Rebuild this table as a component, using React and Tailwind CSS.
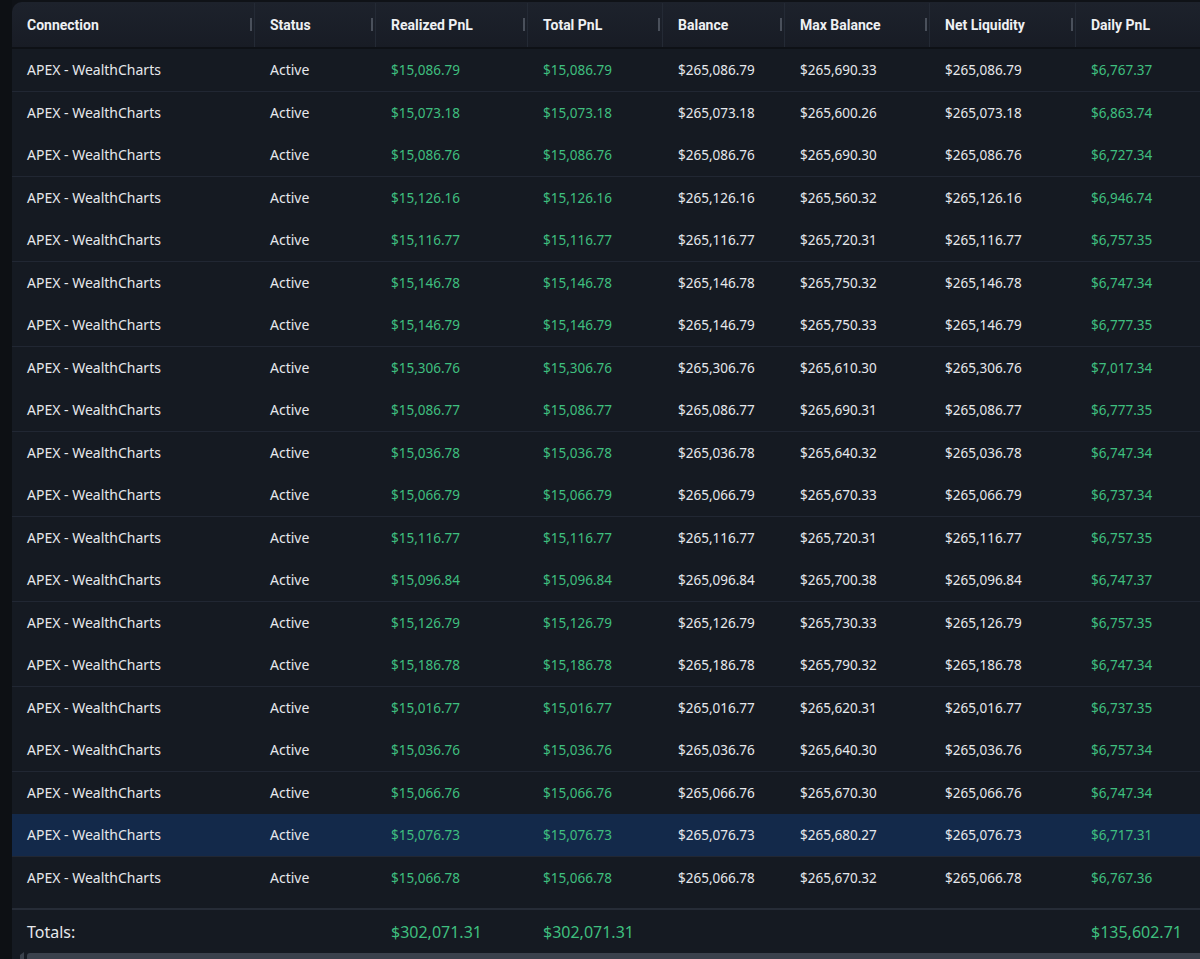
import React from "react";

const rows = [
  ["15,086.79", "265,086.79", "265,690.33", "6,767.37"],
  ["15,073.18", "265,073.18", "265,600.26", "6,863.74"],
  ["15,086.76", "265,086.76", "265,690.30", "6,727.34"],
  ["15,126.16", "265,126.16", "265,560.32", "6,946.74"],
  ["15,116.77", "265,116.77", "265,720.31", "6,757.35"],
  ["15,146.78", "265,146.78", "265,750.32", "6,747.34"],
  ["15,146.79", "265,146.79", "265,750.33", "6,777.35"],
  ["15,306.76", "265,306.76", "265,610.30", "7,017.34"],
  ["15,086.77", "265,086.77", "265,690.31", "6,777.35"],
  ["15,036.78", "265,036.78", "265,640.32", "6,747.34"],
  ["15,066.79", "265,066.79", "265,670.33", "6,737.34"],
  ["15,116.77", "265,116.77", "265,720.31", "6,757.35"],
  ["15,096.84", "265,096.84", "265,700.38", "6,747.37"],
  ["15,126.79", "265,126.79", "265,730.33", "6,757.35"],
  ["15,186.78", "265,186.78", "265,790.32", "6,747.34"],
  ["15,016.77", "265,016.77", "265,620.31", "6,737.35"],
  ["15,036.76", "265,036.76", "265,640.30", "6,757.34"],
  ["15,066.76", "265,066.76", "265,670.30", "6,747.34"],
  ["15,076.73", "265,076.73", "265,680.27", "6,717.31"],
  ["15,066.78", "265,066.78", "265,670.32", "6,767.36"],
];

const headers = [
  "Connection",
  "Status",
  "Realized PnL",
  "Total PnL",
  "Balance",
  "Max Balance",
  "Net Liquidity",
  "Daily PnL",
];

const GRID =
  "grid grid-cols-[243px_121px_152px_135px_122px_145px_146px_1fr]";

export default function App() {
  return (
    <div className="flex h-[959px] w-[1200px] overflow-hidden bg-[#0f1217]">
      <div className="w-[12px] shrink-0 bg-[#0d1014]" />
      <div className="flex flex-1 flex-col pt-[2px]">
        {/* Header */}
        <div
          className={`${GRID} h-[47px] shrink-0 rounded-tl-[10px] bg-gradient-to-b from-[#1d222c] to-[#181c25] border-b-2 border-[#0e1116] pt-[1px] font-['Roboto',sans-serif] text-[14px] font-bold text-[#eef0f3]`}
        >
          {headers.map((h, i) => (
            <div
              key={h}
              className={`relative flex items-center pl-[15px] ${
                i < headers.length - 1 ? "border-r border-[#242a35]" : ""
              }`}
            >
              {h}
              {i < headers.length - 1 && (
                <span className="absolute right-[2px] top-[15px] h-[13px] w-[2px] bg-[#4a505b]" />
              )}
            </div>
          ))}
        </div>

        {/* Body */}
        <div className="flex flex-col bg-[#151a22] pb-[9px] font-['Noto_Sans',sans-serif] text-[13.5px] text-[#e6e8ec]">
          {rows.map((r, i) => {
            const hl = i === 18;
            return (
              <div
                key={i}
                className={`${GRID} h-[42.5px] items-center ${
                  hl ? "bg-[#13294a]" : ""
                } ${i % 2 === 0 && i !== 19 ? "border-b border-[#212733]" : ""}`}
              >
                <div className="pl-[15px] text-[14px]">APEX - WealthCharts</div>
                <div className="pl-[15px] text-[14px]">Active</div>
                <div className="pl-[15px] text-[#3fbf7f]">${r[0]}</div>
                <div className="pl-[15px] text-[#3fbf7f]">${r[0]}</div>
                <div className="pl-[15px]">${r[1]}</div>
                <div className="pl-[15px]">${r[2]}</div>
                <div className="pl-[15px]">${r[1]}</div>
                <div className="pl-[15px] text-[#3fbf7f]">${r[3]}</div>
              </div>
            );
          })}
        </div>

        {/* Totals */}
        <div
          className={`${GRID} h-[43px] shrink-0 items-center border-t-2 border-[#262c37] bg-[#151a22] pt-[3px] font-['Noto_Sans',sans-serif] text-[16px] text-[#e6e8ec]`}
        >
          <div className="pl-[15px]">Totals:</div>
          <div />
          <div className="pl-[15px] text-[#3fbf7f]">$302,071.31</div>
          <div className="pl-[15px] text-[#3fbf7f]">$302,071.31</div>
          <div />
          <div />
          <div />
          <div className="pl-[15px] text-[#3fbf7f]">$135,602.71</div>
        </div>

        {/* Scrollbar */}
        <div className="flex h-[8px] items-end bg-[#151a22]">
          <svg width="15" height="7" viewBox="0 0 15 7" className="shrink-0">
            <path d="M8 3 L12 0 L12 7 L8 7 Z" fill="#3a414c" />
          </svg>
          <div className="h-[6px] flex-1 rounded-tl-[3px] bg-[#3a414c]" />
        </div>
      </div>
    </div>
  );
}
